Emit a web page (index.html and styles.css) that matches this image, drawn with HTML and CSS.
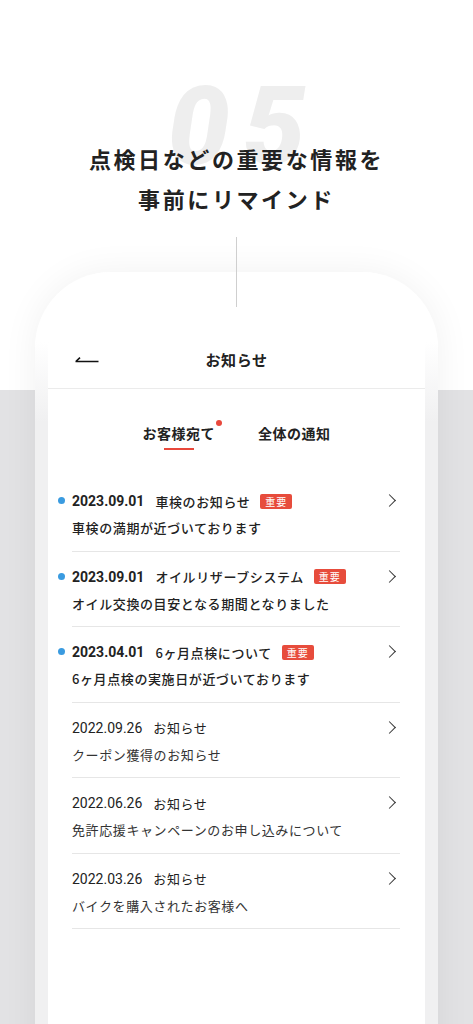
FILE: index.html
```html
<!DOCTYPE html>
<html lang="ja">
<head>
    <meta charset="UTF-8">
    <title>お知らせ</title>
    <link rel="stylesheet" href="styles.css">
</head>
<body>
<div class="page">
    <div class="hero">
        <div class="hero-num">05</div>
        <h1 class="hero-title">点検日などの重要な情報を<br>事前にリマインド</h1>
    </div>
    <div class="hero-line"></div>

    <div class="phone">
        <div class="screen">
            <div class="header">
                <span class="back">
                    <svg width="24" height="8" viewBox="0 0 24 8"><path d="M0.5 6.5 H23.5 M0.8 6.5 L5 2.6" fill="none" stroke="#111" stroke-width="1.6"/></svg>
                </span>
                <span class="header-title">お知らせ</span>
            </div>

            <div class="tabs">
                <div class="tab current">お客様宛て<i class="tab-dot"></i></div>
                <div class="tab">全体の通知</div>
            </div>

            <ul class="list">
                <li class="item unread">
                    <div class="item-head"><span class="date">2023.09.01</span><span class="ttl">車検のお知らせ</span><span class="badge">重要</span></div>
                    <div class="item-sub">車検の満期が近づいております</div>
                </li>
                <li class="item unread">
                    <div class="item-head"><span class="date">2023.09.01</span><span class="ttl">オイルリザーブシステム</span><span class="badge">重要</span></div>
                    <div class="item-sub">オイル交換の目安となる期間となりました</div>
                </li>
                <li class="item unread">
                    <div class="item-head"><span class="date">2023.04.01</span><span class="ttl">6ヶ月点検について</span><span class="badge">重要</span></div>
                    <div class="item-sub">6ヶ月点検の実施日が近づいております</div>
                </li>
                <li class="item">
                    <div class="item-head"><span class="date">2022.09.26</span><span class="ttl">お知らせ</span></div>
                    <div class="item-sub">クーポン獲得のお知らせ</div>
                </li>
                <li class="item">
                    <div class="item-head"><span class="date">2022.06.26</span><span class="ttl">お知らせ</span></div>
                    <div class="item-sub">免許応援キャンペーンのお申し込みについて</div>
                </li>
                <li class="item">
                    <div class="item-head"><span class="date">2022.03.26</span><span class="ttl">お知らせ</span></div>
                    <div class="item-sub">バイクを購入されたお客様へ</div>
                </li>
            </ul>
        </div>
    </div>
</div>
</body>
</html>
```

FILE: styles.css
```css
* {
    margin: 0;
    padding: 0;
    box-sizing: border-box;
}

ul {
    list-style: none;
}

body {
    font-family: Roboto, "Noto Sans CJK JP", sans-serif;
    color: #222;
    background: #fff;
}

.page {
    width: 473px;
    height: 1024px;
    overflow: hidden;
    background: linear-gradient(to bottom, #fff 0, #fff 390px, #e2e2e4 390px);
}

.hero {
    position: relative;
    padding-top: 138px;
    text-align: center;
}
.hero-num {
    position: absolute;
    left: 0;
    right: 0;
    top: 87px;
    font-family: Roboto, sans-serif;
    font-weight: 900;
    font-style: italic;
    font-size: 110px;
    line-height: 80px;
    letter-spacing: 14px;
    padding-left: 14px;
    color: #eeeeee;
}
.hero-title {
    position: relative;
    font-family: "Noto Sans CJK JP", sans-serif;
    font-size: 22px;
    font-weight: 700;
    line-height: 40px;
    letter-spacing: 2.6px;
    color: #222;
}

.hero-line {
    position: relative;
    z-index: 2;
    width: 1px;
    height: 70px;
    margin: 19px auto 0;
    background: #cfcfcf;
}

.phone {
    margin: -35px 35px 0;
    height: 800px;
    padding: 18px 13px 0;
    border-radius: 76px 76px 0 0;
    background: linear-gradient(to bottom, #fff 0, #fff 70px, #f0f0f1 150px);
    box-shadow: 0 0 36px rgba(0, 0, 0, 0.06);
}
.screen {
    height: 100%;
    padding-top: 50px;
    border-radius: 62px 62px 0 0;
    background: #fff;
}

.header {
    position: relative;
    height: 49px;
    padding-bottom: 9px;
    border-bottom: 1px solid #ebebeb;
    text-align: center;
}
.back {
    position: absolute;
    left: 27px;
    top: 15px;
    line-height: 0;
}
.header-title {
    font-family: "Noto Sans CJK JP", sans-serif;
    font-size: 15px;
    font-weight: 700;
    line-height: 40px;
    letter-spacing: 0.6px;
}

.tabs {
    display: flex;
    justify-content: center;
    gap: 43px;
    padding-top: 34px;
}
.tab {
    position: relative;
    padding-bottom: 7px;
    font-family: "Noto Sans CJK JP", sans-serif;
    font-size: 14px;
    font-weight: 700;
    line-height: 20px;
    letter-spacing: 0.5px;
}
.tab.current:after {
    content: "";
    display: block;
    width: 30px;
    height: 2px;
    margin: 5px auto 0;
    background: #e8483c;
}
.tab.current {
    padding-bottom: 0;
}
.tab-dot {
    position: absolute;
    right: -7px;
    top: -3px;
    width: 6px;
    height: 6px;
    border-radius: 50%;
    background: #e8483c;
}

.list {
    margin: 26px 25px 0 24px;
}
.item {
    position: relative;
    display: flex;
    flex-direction: column;
    gap: 7px;
    padding: 15px 0 12.5px;
    border-bottom: 1px solid #e6e6e6;
}
.item:after {
    content: "";
    position: absolute;
    right: 6px;
    top: 20px;
    width: 8px;
    height: 8px;
    border-top: 1.3px solid #333;
    border-right: 1.3px solid #333;
    transform: rotate(45deg);
}
.item.unread:before {
    content: "";
    position: absolute;
    left: -14px;
    top: 21px;
    width: 7px;
    height: 7px;
    border-radius: 50%;
    background: #3a9be0;
}
.item-head {
    display: flex;
    align-items: center;
    height: 20px;
    font-size: 13px;
    letter-spacing: 0.6px;
}
.date {
    font-family: Roboto, sans-serif;
    font-size: 14px;
    letter-spacing: 0;
    margin-right: 11px;
}
.ttl {
    font-family: "Noto Sans CJK JP", sans-serif;
}
.badge {
    margin-left: 10px;
    width: 32px;
    height: 15px;
    line-height: 15px;
    border-radius: 2px;
    background: #e74c3c;
    color: #fff;
    font-family: "Noto Sans CJK JP", sans-serif;
    font-size: 10px;
    text-align: center;
    letter-spacing: 1px;
}
.item-sub {
    font-family: "Noto Sans CJK JP", sans-serif;
    font-size: 13px;
    line-height: 20px;
    letter-spacing: 0.6px;
    color: #333;
}
.item.unread .date {
    font-weight: 700;
}
.item.unread .ttl,
.item.unread .item-sub {
    font-weight: 500;
    color: #222;
}
```
